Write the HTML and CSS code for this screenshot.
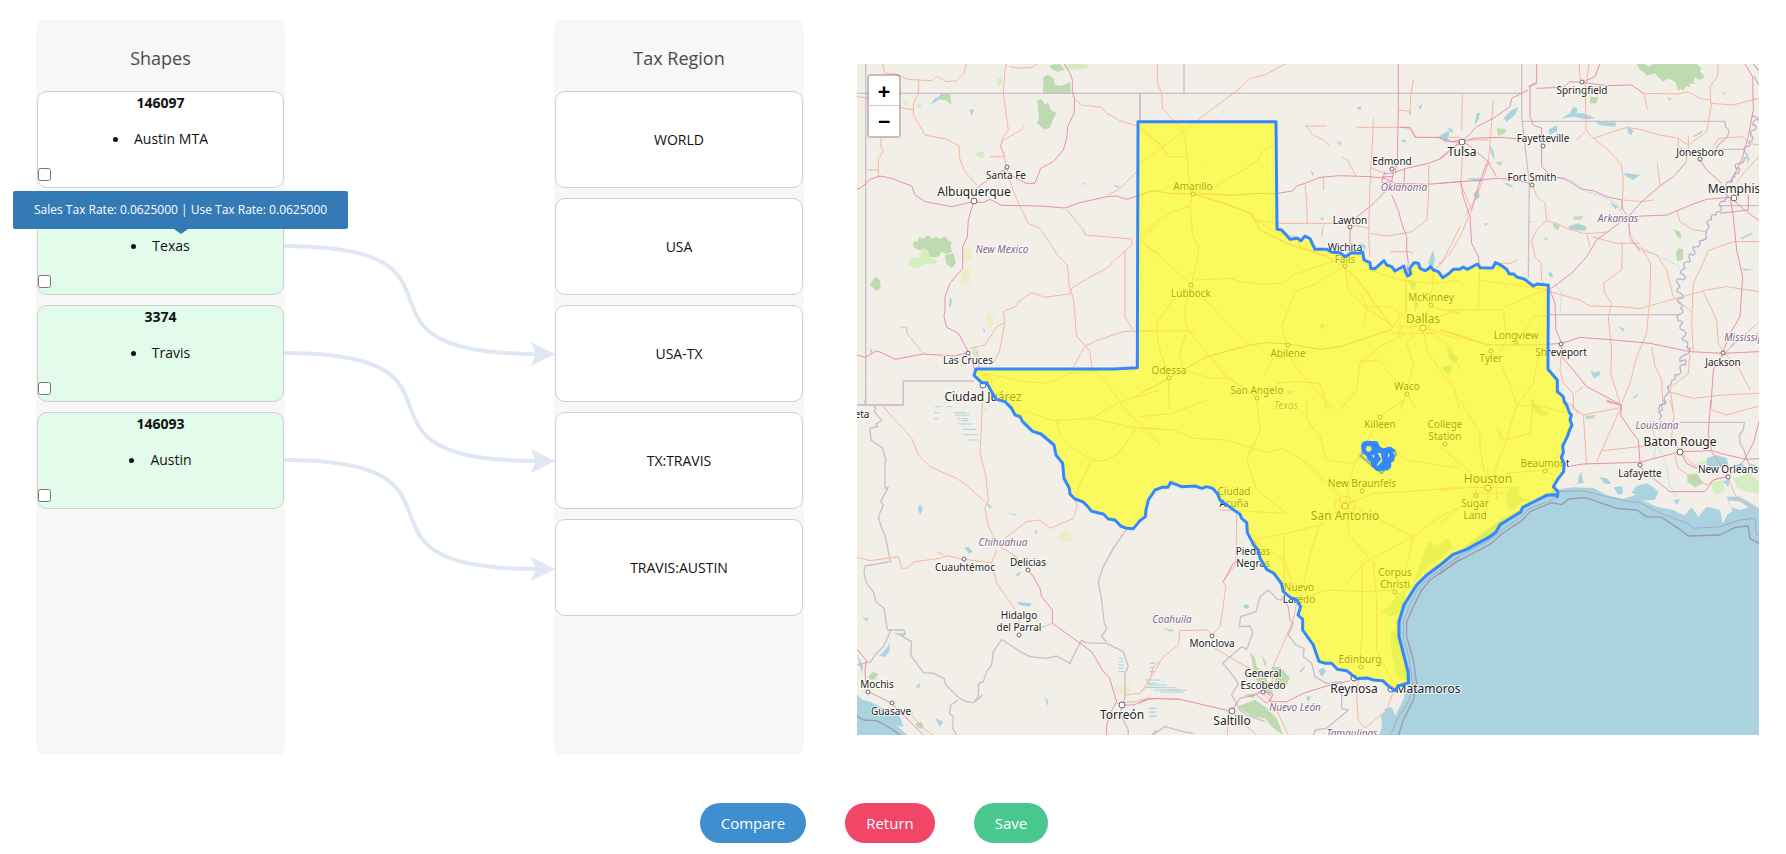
FILE: index.html
```html
<!DOCTYPE html>
<html lang="en">
<head>
<meta charset="utf-8">
<title>Tax region mapping</title>
<link rel="stylesheet" href="styles.css">
</head>
<body>
<main class="layout">
  <section class="column">
    <h2 class="column-title">Shapes</h2>
    <div class="cards">
      <article class="card">
        <label class="card-title" for="s1">146097</label>
        <ul class="names"><li>Austin MTA</li></ul>
        <input class="check" type="checkbox" id="s1">
      </article>
      <article class="card linked">
        <div class="card-title"></div>
        <ul class="names"><li><label for="s2">Texas</label></li></ul>
        <input class="check" type="checkbox" id="s2">
        <div class="tooltip" role="tooltip">Sales Tax Rate: 0.0625000 | Use Tax Rate: 0.0625000</div>
      </article>
      <article class="card linked">
        <label class="card-title" for="s3">3374</label>
        <ul class="names"><li>Travis</li></ul>
        <input class="check" type="checkbox" id="s3">
      </article>
      <article class="card linked">
        <label class="card-title" for="s4">146093</label>
        <ul class="names"><li>Austin</li></ul>
        <input class="check" type="checkbox" id="s4">
      </article>
    </div>
  </section>

  <svg class="links" viewBox="285 20 269 735" aria-hidden="true">
    <defs>
      <path id="head" d="M0 0L-24 -12Q-21 -4 -19 0Q-21 4 -24 12Z"/>
    </defs>
    <path class="link" d="M284 246C497 246 323 354 537 354"/>
    <path class="link" d="M284 353C497 353 323 461 537 461"/>
    <path class="link" d="M284 460C497 460 323 569 537 569"/>
    <use class="head" href="#head" x="555" y="354"/>
    <use class="head" href="#head" x="555" y="461"/>
    <use class="head" href="#head" x="555" y="569"/>
  </svg>

  <section class="column">
    <h2 class="column-title">Tax Region</h2>
    <div class="cards">
      <article class="card region">WORLD</article>
      <article class="card region">USA</article>
      <article class="card region">USA-TX</article>
      <article class="card region">TX:TRAVIS</article>
      <article class="card region">TRAVIS:AUSTIN</article>
    </div>
  </section>

  <section class="map" aria-label="Map">
    <svg class="map-canvas" viewBox="0 0 902 671" role="img" aria-label="Texas and neighbouring states">
      <g transform="scale(0.33333)">
        <!-- sea -->
        <path class="water" d="M2104 1276L2149 1270L2209 1272L2249 1293L2309 1308L2349 1306L2399 1328L2449 1338L2479 1353L2500 1330L2549 1323L2589 1328L2598 1378L2612 1350L2640 1335L2706 1345V2013H1589L1600 1980L1612 1960L1639 1908L1649 1868L1640 1790L1618 1718L1618 1673L1633 1623L1671 1563L1740 1500L1820 1452L1920 1375L1990 1335L2060 1290Z"/>
        <path class="water" d="M0 1893L15 1905L30 1920L60 1935L80 1955L100 1975L125 1990L150 2013H0Z"/>
        <path class="water" d="M1575 1975L1572 1960L1590 1945L1580 1935L1605 1930L1615 1960L1600 2013H1570Z"/>

        <g transform="translate(-51 -42)">
          <path class="forest" d="M610 80L625 75L640 85L645 105L665 108L690 95L692 130H608L610 105ZM630 45L660 42L675 60L650 65L632 55ZM592 150L605 148L615 165L625 158L632 180L650 190L640 205L630 235L612 238L590 218L597 205ZM218 580L225 572L232 576L238 560L248 566L265 556L275 566L290 560L300 568L318 558L325 572L335 575L332 590L336 605L320 612L305 605L298 618L285 622L262 620L250 604L235 600L222 592ZM315 615L340 610L348 640L335 655L318 640ZM90 705L105 680L120 690L122 715L108 722ZM300 128L330 130L335 165L318 150L300 150Z"/>
          <path class="grass" d="M672 42H742V55L700 60L685 58ZM470 82L486 82V106L470 106ZM202 645L215 625L240 620L245 595L265 600L268 622L290 630L285 645L260 640L235 655L215 652ZM405 308L432 305L430 325L412 320ZM190 155L200 160L195 170ZM400 890L420 905L405 925L395 915ZM230 165L245 160L240 178Z"/>
          <path class="sand" d="M370 655H390V700L358 712L362 680ZM440 790L460 795L462 820L452 838L440 815ZM365 595L392 585L395 630L370 640Z"/>
          <path class="water" d="M270 165L285 145L300 138L310 125L306 142L288 155ZM388 180L402 178L395 198ZM327 770L330 742L336 748L332 772ZM815 405L840 408L835 413ZM728 400H740L735 405ZM88 895L98 900L95 912ZM428 835L436 840L433 850Z"/>
          <path class="border" d="M77 42V1063M51 130H901V215M51 1065H190V993H402M901 130H960"/>
          <path class="trunk" d="M128 42L135 70L165 72L205 88L240 90L275 92L290 80L320 95L350 92L372 70L378 42M237 90L235 130L220 160V195L255 255L320 268L357 288L360 330L375 365L410 405M51 140L90 145L110 165L165 170L220 180M500 42L495 60L490 130L498 190L505 240L490 260L482 285L500 350M550 225L545 240L490 270L480 290L497 320M450 320H490M510 50L540 55L575 52L590 42M704 148L725 165L785 172L800 190L840 212L892 228M500 352L515 410L540 470L565 520L600 535L630 580L655 618L682 645L688 710L700 745L710 860L735 885L750 905L755 950M688 735L695 715L735 690L800 655L820 635L875 585V567L735 555L730 538L705 510L680 478M805 435L840 415L890 365M686 732L615 742L575 728L535 755L530 768L495 782L490 790L495 815L485 870L478 905L460 940M495 818L470 830L435 885L390 895M700 952L735 888L770 872L850 845L890 843M855 600V800L880 840M182 832H200V850L252 912M123 262V290L130 305L115 325V378M77 360H115M410 905L418 930L415 955"/>
          <path class="trunk" d="M892 228L925 250L960 285M892 438L925 425L960 420M900 570L960 515M900 570L960 615M890 843H960M418 965L470 978L540 992L610 1000L650 990L690 968L770 965M755 950L800 1000L840 1055L960 1020M425 975H445V1000M430 985H455V1005"/>
          <path class="motorway" d="M51 418L65 412L90 388L120 378L155 385L215 408L225 435L255 455L310 465L335 470L400 455L430 458L450 448L485 466L600 468L675 474L720 458L800 440L830 438L860 448L892 438M672 42L690 70L697 90V125L704 148L702 190L683 230L680 265L670 300L640 335L602 355L585 400L560 400L540 390L490 365M410 415L450 385L500 355M402 455L395 475L385 510L382 560L368 590V655L330 700L315 740V780L312 800L320 832L355 850L385 905M51 915L75 922L110 903L130 910L165 928L250 912L340 918L385 908L405 960"/>
        </g>

        <g transform="translate(849 -42)">
          <path class="water" d="M828 160L838 170L848 155L842 180ZM650 172L665 170L660 182ZM590 272L605 278L602 288ZM780 272L795 268L800 278ZM510 360L522 370L518 378ZM920 230L940 240L935 248ZM895 260L930 240L920 280ZM500 475L510 482ZM540 505L552 502L548 512ZM865 640L878 600L885 625L878 655ZM660 575L680 590L672 600ZM800 690L830 700L820 720ZM820 730L835 760L825 785ZM920 890L935 910L955 920L945 940L928 925ZM905 950L940 945L925 975ZM540 825L555 822L545 840ZM245 855L258 862ZM330 965L342 970ZM440 1022L460 1025L450 1035ZM570 675L580 690ZM500 785L510 790Z"/>
          <path class="grass" d="M242 182L256 182L250 192ZM185 350L200 345L190 358Z"/>
          <path class="border" d="M0 215V130H960M132 42V130"/>
          <path class="trunk" d="M52 42V100L65 130L68 175L100 212L130 240L143 320L143 375L157 430L150 470L155 520L158 560L177 590L172 630L155 700M435 42L375 75L330 85L300 115L180 205L130 245L70 290L0 340M0 238L65 285L85 320H143M215 415L275 380L310 360L355 330L360 310L400 285M150 468L90 490L40 520L0 560M0 570L100 655L155 705L245 800L330 885M155 705L95 755L52 815L50 850L60 900L85 980L88 1080M165 690L270 685L300 695L360 702L430 700L460 675L560 640L610 625M158 710L135 770L137 820L150 850L210 920L260 980L350 1040M0 842H138L165 850M138 850L118 910L130 960L210 985L270 985L345 1040M610 650L520 705L465 725L425 830L440 880L450 920L480 970L520 1010L580 1080M615 655L625 720L680 775L760 830M700 205L698 270L692 350V400M690 400L688 470L686 560L690 620M690 352L735 372M650 232H780L810 235L825 262H960M495 228L560 228M500 230L520 255L550 270L572 290M605 322L622 330L648 378M495 405L500 450L502 525M550 380V420M550 525L545 560M415 520H600L690 535M690 550L740 558L780 552L815 545L860 510L866 430V345M820 90L812 140L810 195M775 180L808 184L810 195M960 530L930 590L905 640L880 660L880 690L870 760M350 510L410 550L470 560L480 590L560 620M230 450L330 490L345 510L415 520M750 605H810L820 612M670 770H760M670 830L680 770L660 730M960 690L880 700L780 690L690 660M660 935L720 930L740 960L800 1030M600 1080L650 1020L660 940L720 890L800 850M370 980L400 925L445 920M410 1000L460 995L540 1000L550 1030L560 1080"/>
          <path class="trunk" d="M755 835L780 800L765 780L848 830M848 830L960 870M848 830L930 890L960 960M848 830L800 880L820 940L800 1030M755 830H870M755 850H880M780 815V855M815 820V860M848 830L870 770L960 790M848 830L900 800L960 775M848 830L860 900L900 960M800 1030L780 1080M800 1030L830 1080"/>
          <path class="motorway" d="M775 42V180L772 330L765 370M415 430L460 422L470 408L495 400L540 382L600 377L690 380L735 385L765 400L860 403L900 400L960 395M755 370L800 355L865 340L905 325L960 275M780 232H810L828 262L910 263L935 275L960 270M645 505L690 470L735 425M630 530V610M755 435L775 480L785 520L800 560V600L805 640L798 680V790M735 372L760 368L755 395L725 398L735 365M725 380H760M793 355V400L755 410M898 640L905 635M0 435L40 422L90 430L160 432L215 432L275 436L360 430L408 432M160 432L250 460L335 490L360 540L440 580L560 620L610 650L650 685L755 830M0 1030L60 1000L200 920L330 885L380 878L445 882L540 898L600 890L660 870L755 838"/>
        </g>

        <g transform="translate(1749 -42)">
          <path class="forest" d="M590 42H615L625 50L640 42H770L785 55L780 65L795 80L780 90L765 82L760 95L768 102L750 100L748 112L738 108L732 122L722 116L715 122L705 95L685 85L670 95L655 82L645 70L620 78L610 65L600 60ZM450 140L475 142L470 160L450 160ZM170 235L200 238L195 250L175 258ZM165 335L190 335L180 348ZM758 258L790 240L785 250L762 262ZM400 500L430 498L425 508L402 510ZM338 520L360 525L355 540L342 535ZM385 528L415 520L440 530L438 542L390 540ZM708 610L715 595L730 598L728 630L712 634ZM700 538L720 545L725 568L712 560ZM308 562L325 565L318 572ZM850 128L860 125L850 138ZM680 142L695 145L690 152ZM920 320L930 325L922 340ZM738 895L755 892L752 905ZM255 512L285 514L270 516ZM290 465L305 468Z"/>
          <path class="water" d="M105 215L110 190L120 188L115 210L105 225ZM190 205L215 180L235 172L225 195L200 215ZM325 240L350 225L352 242L330 255ZM390 190L400 170L412 175L410 190L430 190L465 205L440 208L400 200L365 205ZM460 210L490 215L530 218L525 230L480 226ZM560 230L580 240L575 255L565 250ZM548 370L580 372L600 375L580 390L560 380ZM148 285L160 300L165 330L155 315ZM80 385H125L118 395L95 392ZM190 400L205 400L220 408L215 412ZM100 430L115 420L120 440L108 450ZM385 535L410 522L440 535L420 540ZM130 520H145L138 528ZM900 565L940 545L935 553L905 568ZM905 655L942 658L915 662ZM325 665L335 668L340 680L330 682ZM535 828L555 838L548 845ZM450 962L465 968L478 962L480 975L462 985ZM575 1045L595 1030L590 1042ZM120 600L135 605ZM230 585L240 600ZM888 605L910 605ZM0 265L20 255L25 270ZM510 455L535 470L525 478ZM870 890L885 870L880 888Z"/>
          <path class="border" d="M0 130H245M245 42V200L268 400L265 685M247 214H855M855 214L857 232L868 240L862 262L845 275L832 290L828 298H915M325 794H715M835 467H957"/>
          <path class="river" d="M940 42L957 62M942 80L957 105M935 200Q950 195 955 210Q940 205 938 225Q955 225 945 240Q925 240 935 258Q945 270 928 275Q935 290 920 290Q905 295 918 310Q930 320 912 325Q915 338 900 340Q880 340 888 355Q905 350 895 370Q880 365 885 380Q870 380 878 395Q860 390 858 405Q850 430 865 440Q850 450 855 455Q840 450 838 465Q850 475 840 485Q825 485 828 495Q810 490 815 510Q805 505 800 520Q815 530 800 540Q795 560 800 565Q785 575 778 572Q785 590 770 590Q752 590 762 600Q770 615 755 615Q745 605 748 625Q755 640 740 635Q725 640 735 655Q720 660 722 670Q745 680 730 690Q705 680 712 700Q725 710 715 715Q702 725 720 728Q740 745 720 745Q705 745 718 760Q735 765 722 775Q735 785 725 790Q705 795 715 812Q735 815 722 825Q715 840 730 840Q745 850 732 860Q720 870 735 872Q750 880 740 890Q755 900 745 910Q715 920 720 935Q745 920 735 945Q715 940 722 962Q725 975 705 975Q710 990 695 992Q695 1008 682 1010Q690 1025 680 1035Q665 1045 678 1055Q672 1065 660 1065L655 1080"/>
          <path class="stream" d="M350 385L400 395L440 425L490 440L530 460L550 500M570 545L600 590L650 615L720 650M345 700L365 730L360 790"/>
          <path class="trunk" d="M67 130L65 240M66 276V350L62 400L95 480L60 560L30 610L0 640M80 270H145M160 150L155 215L145 340L110 440L75 500M140 340H155M418 42L420 90M447 42L440 100M436 100L438 240L460 265L505 300L545 345L550 400L545 480M410 270L435 245M460 265L520 245L560 232L600 238L660 255L715 265L745 285L800 245L808 200L815 160L808 150L780 145L745 125L715 132L612 130M612 130L622 178M835 42L832 80L810 110L812 160L880 165L957 145M745 258L745 305L738 335M715 265V290L740 305M820 290L835 265L910 260L925 280L957 285M652 340L660 405M957 320L910 370L890 400M550 450L605 455L640 450M280 410L290 440L315 460L320 510L290 540L275 570L285 620L303 640L305 690L325 715M320 512L350 520L380 535L430 550L460 550L510 545M440 550L450 590M455 560L530 580L600 580M547 580L545 660L490 700L495 730L515 760L505 800L515 900L512 970L540 1060M568 570L605 600L650 615L680 660L700 740L760 790M605 595L632 640L630 740L620 850L590 920L570 1000L545 1060M330 725L420 750L450 768L540 770L600 776L690 750L800 720L860 710L957 725M710 480L720 515L760 540L800 545M957 575L880 575L805 602L780 660L760 700L755 820L760 905M790 725L830 810L835 880L850 905L900 960L930 1020M957 815L870 895L852 910M635 890L645 950L665 990L668 1060M685 1025L760 1045L850 1035L957 1030M750 910L745 970L690 1015L700 1080M365 895L360 960L370 1000L400 1030L400 1080M430 1010L405 1030M170 640H210L235 628M120 640L118 690L115 780M118 690L325 720M195 770L290 730L325 720M240 870L280 800L325 795M0 840L60 855L115 875M25 780H190L200 870L170 920L210 1000L230 1070M60 1080L40 1010L0 960M230 1065L280 1000L300 900"/>
          <path class="motorway" d="M290 42V100L270 110V200L280 225L305 235V350L330 375M290 115L370 112L390 95L426 97L500 107L575 105L610 130M480 42L465 80L426 97M0 265L30 275L66 276L100 265L175 262L240 267M66 276L110 230L160 205L210 170L215 145L265 120M290 97L265 110M66 270L90 290L140 330L170 380M0 400L60 395L110 392L165 385L215 388L270 400M66 276L30 300L0 325M140 340L115 410L95 480M62 395L70 440L90 500L95 580L115 620L118 640M350 382L375 385L425 418L460 422L500 440L545 450L548 478L565 500M565 500L605 455L660 408L700 380L740 335M565 500L680 495L760 462L800 448L870 442M565 500L510 540L470 570L440 620L400 665L355 700L328 718M565 500L570 560L600 605M780 330L800 360L845 400M915 42L938 80L940 180L925 260L905 330L870 400M870 442L880 500L890 600L908 680L900 800L870 850L850 905M870 442L920 485L957 512M925 435V480L840 490M330 720L345 760L348 840L365 880M295 885L365 880L420 862L500 868L630 880L750 905L850 910L957 905M365 880V920L400 960L440 1010L545 1065M850 910L820 960L812 1080M0 838L90 870L150 885L225 885L295 885M545 1065L540 1080M545 1065L500 1055"/>
        </g>

        <g transform="translate(-51 1008)">
          <path class="forest" d="M85 830L98 815L115 822L105 838L90 840ZM205 930L220 935L215 945ZM225 970L245 965L252 985L235 985Z"/>
          <path class="sand" d="M652 410L680 385L705 430L690 425L660 425ZM820 860L875 845L870 880L840 885ZM580 820L600 830L595 845ZM430 10L445 30L430 38Z"/>
          <path class="water" d="M233 325L240 312L248 328L240 345ZM373 442L385 440L398 455L388 463ZM437 303L455 320L450 328ZM495 340L530 342L525 346ZM525 525L545 512L535 528ZM582 395L592 388L588 405ZM530 606L575 610L570 620L540 615ZM612 885L625 905L622 918ZM60 640L75 655L85 652L80 665ZM118 768L135 750L150 730L148 755L135 770ZM160 700L195 700L190 712ZM228 860L240 848L238 865ZM285 955L310 965L300 980ZM50 760L70 800L65 820ZM51 895L90 905L110 915L140 930L180 950L190 980L160 975L120 960L60 930Z"/>
          <path class="hatch" d="M285 20H300M282 38H298M282 56H296M320 20H335M340 38H380M350 56H385M355 72H400M368 88H410M370 104H412M385 120H415M345 45H388M365 62H385M838 775H850M835 785H850M835 795H852M835 805H850M834 815H852M930 790H945M930 803H942M915 840H960M920 850H950M915 862H960M928 925H950M926 936H948M928 948H950"/>
          <path class="maritime" d="M51 948L70 960L110 962L135 975L160 990L180 1005"/>
          <path class="border" d="M75 0V14M51 14H190V0M98 14L108 25L103 35L125 62L108 72L112 80L90 85L93 120L128 145L138 182L135 190V265L145 262L122 305L130 315L115 350L125 385L135 405L148 470L152 485L75 498L72 520L80 550L100 575L108 605L132 625L142 690L160 690H192L195 702L188 710L215 725L212 765L250 818L280 820L312 835L318 855L355 892L378 905L400 908L415 890L416 850L430 845L440 815L455 795L460 755L485 718L510 735L550 760L570 770L620 775L650 768L690 790L705 758L725 720L735 728L800 730L850 755L865 800L855 820V890L840 940L865 990V1005M428 885L405 905M355 900L332 915L328 940L340 950L338 985L350 1005M152 692L130 740L105 765L92 785L51 795M858 390L820 445L790 500L775 545L785 600L792 665L800 685L785 710L800 725M935 1005L950 990"/>
          <path class="trunk" d="M125 14L160 55L190 85L215 115L235 165L270 200L350 235L385 260L435 305M427 0L425 60L420 160L438 230L445 300L435 325L445 380L480 440M495 415L560 365L600 360L630 385L700 355L712 320L705 300M51 472L90 482L175 470L185 505H200L225 485L300 475L320 467L370 478L455 488L470 450M290 455L310 465M480 440L530 470L540 500M455 490L470 550L520 620L540 670M600 685L637 670M215 945L250 985L280 1005M855 885L900 880L925 855L940 800L960 785M830 910L880 905L960 895"/>
          <path class="trunk" d="M530 45L560 35L640 62L755 55L840 5M755 55L890 85L960 85M650 65L660 105L700 145L755 180L790 183L830 165L865 120L890 85M755 180L715 260L712 300M835 0L870 45L915 85L960 135"/>
          <path class="motorway" d="M565 512L580 530L600 565L605 590L637 630V670L700 715L755 755L790 815L808 832L830 905M830 905L818 925L800 975V1005M845 915L880 915L920 900M51 748L80 782L75 810L78 860M85 875L155 910L250 1005"/>
        </g>

        <g transform="translate(849 1008)">
          <path class="forest" d="M330 755L345 775L350 800L370 815L385 850L400 880L380 880L350 840L340 800ZM365 765L380 790L375 800ZM395 800L420 800L450 835L435 860L410 865ZM290 920L345 900L375 920L410 955L430 1005L400 985L375 955L340 950ZM310 885L350 880L340 895ZM65 680L85 688L105 690L90 695Z"/>
          <path class="water" d="M308 618L320 612L330 620L318 628ZM535 812L550 802L558 815L545 830ZM498 890L512 888L505 905ZM720 945L755 925L765 950L740 990L750 1005H715L735 975Z"/>
          <path class="hatch" d="M30 790H45M28 802H45M30 815H45M25 855H80M25 863H110M40 870H118M60 876H130M80 870H140M28 925H48M26 937H46M30 949H50"/>
          <path class="border" d="M428 600L412 598L385 570L360 590L348 635L302 650L298 680L330 678L338 700L320 748L305 740L248 790L270 815L295 850L275 885L300 930L320 945L375 965M425 590L445 620L450 660L460 670L445 705L468 735L492 745L490 770L515 790L525 830L560 850L605 845M605 850V925L625 930L560 985L525 990L522 1005M38 1005L75 980L130 995L160 1000M495 800L480 815"/>
          <path class="trunk" d="M290 345L288 490L250 545L258 560L240 680L216 705M216 710L205 690L120 692L115 735L70 770L40 820L0 880M225 745L300 790L360 820L370 870M470 610L460 660L430 730L400 800L395 860M265 935L262 1005M275 935L300 960L350 1005M370 880L400 910L445 1005M655 840L650 900L655 960L675 985M760 875L740 930L675 985M0 900L50 895L120 898"/>
          <path class="motorway" d="M0 910L20 895L120 898L265 932M275 932L300 895L345 885L370 870L395 890L390 905L440 905L490 880L560 858L630 842M300 480L280 490L248 548M365 870L400 885L380 910L350 885Z"/>
          <path class="trunk" d="M0 85L100 90L160 115L260 120L380 158L430 145L500 190L600 290M615 315L540 375L520 430L500 510L480 600M625 318V400L700 490L760 570M615 315L700 280L800 275L960 262M615 315L640 200L720 50L790 0M720 120L800 180L960 205M666 490V690L662 790M480 600L560 570L670 575L760 570M700 490L710 600V750L760 850M340 420L440 400L540 375M0 50L100 40L200 0M820 410L900 350L960 320M820 410L740 370L640 320M820 410L800 500L760 570M440 340L240 330M440 340L350 270L320 180L360 90L350 0M432 400L432 560M610 560L670 490L820 410M480 600L430 480L340 420M500 0V60L540 110L560 180L640 190"/>
          <path class="trunk" d="M585 315A30 25 0 1 0 645 315A30 25 0 1 0 585 315M600 290V340M630 290V340M585 305H650"/>
          <path class="maritime" d="M960 478L910 512L870 540L845 570L820 620L800 665V710L820 780L830 850L820 900L790 960L776 1005"/>
          <path class="maritime thin" d="M960 470L905 505L865 535L835 565L808 618L790 665V710L808 780L818 850H832M818 850L808 900L770 960L752 1005"/>
        </g>

        <g transform="translate(1749 1008)">
          <path class="grass" d="M600 290L625 285L635 300L615 308L600 300ZM770 185L800 182L795 200L775 195ZM810 250L850 240L855 270L825 285ZM880 235L930 220L957 245V280L920 275L890 260Z"/>
          <path class="forest" d="M742 225L770 220L790 250L765 262L742 245ZM435 48L468 45L460 55L440 58Z"/>
          <path class="water" d="M418 225L424 215L428 240L432 248L412 252ZM478 232L500 235L515 252L495 252ZM520 262L545 258L550 278L535 285ZM590 258L620 250L640 262L655 275L645 300L610 300L590 285L575 278ZM800 175L830 165L860 175L865 195L835 205L800 195ZM885 195L905 190L920 205L895 212ZM700 300L720 298L710 315ZM860 290L900 290L957 325V360L880 340ZM540 300L600 280L620 320ZM850 245L870 235L865 262ZM930 190L957 200V215L935 205Z"/>
          <path class="land" d="M715 312L745 310L790 290L830 295L855 305L852 318L842 325L860 345L848 368L840 330L800 320L775 350L755 322L735 345L715 340ZM868 300L900 305L925 322L900 330L870 320Z"/>
          <path class="river" d="M670 0L678 10L662 15L668 28L655 35L665 48L658 60"/>
          <path class="stream" d="M640 100L655 140L680 200L690 260L710 290M630 60L650 130L640 180"/>
          <path class="border" d="M720 67H913L910 90L898 105L900 130L912 150L922 180L930 200"/>
          <path class="trunk" d="M545 22L430 45L370 0M430 45L440 195M540 28L470 185M485 152L600 140L660 140M690 0L702 45L695 110L720 155M815 30L860 45L957 18M720 155L705 170L715 205L770 240L800 255M720 155L750 185L775 205M865 235L885 285L930 320L957 332M800 255L830 235L862 230M395 10L415 42"/>
          <path class="motorway" d="M500 0L545 18L542 45L575 95L595 120L600 185M392 198L430 192L600 187L720 155L815 152L860 165L920 178L957 176M720 155L740 190L770 205M600 200L640 235L690 275L795 275L820 240L862 230M812 0L805 100L815 155L860 225M957 65L940 130L910 185L870 225"/>
          <path class="trunk" d="M90 245H200M90 262H215M95 280H195M110 225V290M143 205V330M170 240V300M0 270L90 262L143 262M143 262L200 220L310 210L370 195M143 262L120 150V100L60 0M143 262L0 140M143 262L60 320L0 370M143 262L200 120L230 15M230 15L310 20L380 40M200 120L270 100L280 0M310 210L340 225M315 215L360 160"/>
          <path class="maritime" d="M0 522L45 488L155 430L185 402L245 362L270 335L335 308L365 314L385 297L437 293L530 325L590 330L620 350L665 352L715 385L745 408L840 405L885 382L925 378L930 415L957 430"/>
          <path class="maritime thin" d="M0 512L40 478L150 420L180 395L240 352L265 328L335 300L360 275L430 272L500 290L570 305L600 308L640 330L700 355L740 368L760 385L840 380L900 360L945 355L950 405L957 406"/>
        </g>

        <!-- bays and wetlands along the Texas coast -->
        <path class="bay" d="M1949 1290L1960 1270L1985 1268L1990 1300L2015 1305L1985 1320L1965 1340L1950 1325ZM1700 1470L1715 1430L1740 1445L1770 1425L1790 1450L1740 1490L1700 1520L1670 1560L1690 1500ZM1620 1590L1650 1580L1640 1620L1620 1650L1600 1660L1570 1640L1600 1625ZM1600 1700L1625 1700L1640 1780L1652 1850L1620 1840L1605 1780ZM2015 1000L2060 1040L2075 1050L2060 1058L2030 1040ZM1920 1090L1935 1110L1940 1130L1925 1120Z"/>
      </g>

      <g class="dots">
        <circle cx="150" cy="103" r="2"/><circle cx="117" cy="137" r="3"/><circle cx="111" cy="289" r="2"/><circle cx="126" cy="321" r="3"/>
        <circle cx="336" cy="130" r="2"/><circle cx="334" cy="221" r="2"/><circle cx="431" cy="281" r="2"/><circle cx="312" cy="314" r="2"/><circle cx="400" cy="334" r="2"/><circle cx="550" cy="330" r="2"/><circle cx="488" cy="202" r="2"/><circle cx="493" cy="163" r="2"/><circle cx="535" cy="105" r="2"/><circle cx="574" cy="241" r="2"/><circle cx="566" cy="264" r="3"/>
        <circle cx="605" cy="78" r="3"/><circle cx="725" cy="18" r="2"/><circle cx="686" cy="82" r="2"/><circle cx="675" cy="121" r="2"/><circle cx="843" cy="95" r="2"/><circle cx="877" cy="134" r="3"/><circle cx="659" cy="278" r="2"/><circle cx="634" cy="287" r="2"/><circle cx="704" cy="280" r="2"/><circle cx="866" cy="289" r="2"/>
        <circle cx="107" cy="495" r="2"/><circle cx="171" cy="506" r="2"/><circle cx="162" cy="571" r="2"/><circle cx="11" cy="628" r="2"/><circle cx="35" cy="639" r="2"/><circle cx="265" cy="641" r="3"/>
        <circle cx="523" cy="353" r="2"/><circle cx="588" cy="380" r="2"/><circle cx="505" cy="427" r="2"/><circle cx="488" cy="442" r="3"/><circle cx="538" cy="528" r="2"/><circle cx="355" cy="572" r="2"/><circle cx="406" cy="628" r="2"/><circle cx="504" cy="603" r="2"/><circle cx="497" cy="614" r="3"/><circle cx="534" cy="625" r="3"/><circle cx="375" cy="647" r="3"/><circle cx="397" cy="480" r="2"/>
        <circle cx="823" cy="388" r="3"/><circle cx="783" cy="401" r="2"/><circle cx="871" cy="413" r="2"/><circle cx="688" cy="407" r="2"/><circle cx="631" cy="424" r="3"/><circle cx="619" cy="432" r="2"/>
      </g>

      <g class="town">
        <text x="149" y="115">Santa Fe</text><text x="111" y="300">Las Cruces</text>
        <text x="336" y="126">Amarillo</text><text x="334" y="233">Lubbock</text><text x="431" y="293">Abilene</text><text x="312" y="310">Odessa</text><text x="400" y="330">San Angelo</text><text x="550" y="326">Waco</text>
        <text x="488" y="187">Wichita</text><text x="488" y="199">Falls</text><text x="493" y="160">Lawton</text><text x="535" y="101">Edmond</text><text x="574" y="237">McKinney</text>
        <text x="725" y="30">Springfield</text><text x="686" y="78">Fayetteville</text><text x="675" y="117">Fort Smith</text><text x="843" y="92">Jonesboro</text><text x="659" y="275">Longview</text><text x="634" y="298">Tyler</text><text x="704" y="292">Shreveport</text><text x="866" y="302">Jackson</text>
        <text x="5" y="354">eta</text><text x="108" y="507">Cuauhtémoc</text><text x="171" y="502">Delicias</text><text x="162" y="555">Hidalgo</text><text x="162" y="567">del Parral</text><text x="20" y="624">Mochis</text><text x="34" y="651">Guasave</text>
        <text x="523" y="364">Killeen</text><text x="588" y="364">College</text><text x="588" y="376">Station</text><text x="505" y="423">New Braunfels</text><text x="377" y="431">Ciudad</text><text x="377" y="443">Acuña</text><text x="396" y="491">Piedras</text><text x="396" y="503">Negras</text><text x="442" y="527">Nuevo</text><text x="442" y="539">Laredo</text><text x="538" y="512">Corpus</text><text x="538" y="524">Christi</text><text x="355" y="583">Monclova</text><text x="406" y="613">General</text><text x="406" y="625">Escobedo</text><text x="503" y="599">Edinburg</text>
        <text x="783" y="413">Lafayette</text><text x="871" y="409">New Orleans</text><text x="688" y="403">Beaumont</text><text x="618" y="443">Sugar</text><text x="618" y="455">Land</text>
      </g>
      <g class="city">
        <text x="117" y="132">Albuquerque</text><text x="126" y="337">Ciudad Juárez</text><text x="566" y="259">Dallas</text><text x="605" y="92">Tulsa</text><text x="877" y="129">Memphis</text><text x="265" y="655">Torreón</text><text x="488" y="456">San Antonio</text><text x="497" y="629">Reynosa</text><text x="571" y="629">Matamoros</text><text x="375" y="661">Saltillo</text><text x="823" y="382">Baton Rouge</text><text x="631" y="419">Houston</text>
      </g>
      <g class="state">
        <text x="145" y="189">New Mexico</text><text x="547" y="127">Oklahoma</text><text x="429" y="345">Texas</text><text x="761" y="158">Arkansas</text><text x="891" y="277">Mississippi</text><text x="146" y="482">Chihuahua</text><text x="315" y="559">Coahuila</text><text x="438" y="647">Nuevo León</text><text x="495" y="673">Tamaulipas</text><text x="800" y="365">Louisiana</text>
      </g>

      <g transform="scale(0.33333)">
        <path class="shape" d="M843 173H1257L1260 496L1274 498L1299 526L1322 523L1332 530L1344 516L1359 524L1374 556L1409 556L1424 565L1449 566L1464 578L1484 566L1508 568L1517 564L1521 588L1539 596L1541 613L1554 614L1581 590L1589 603L1604 608L1614 621L1630 612L1641 606L1645 622L1652 636L1661 630L1658 614L1671 596L1684 598L1689 613L1704 620L1712 616L1721 608L1729 618L1744 623L1757 641L1774 630L1789 616L1809 616L1819 609L1831 616L1862 600L1869 611L1907 612L1915 596L1929 602L1949 616L1957 630L1970 630L1981 640L2000 644L2011 652L2029 666L2040 660L2060 662L2074 663L2073 916L2101 948V983L2119 998L2122 1014L2129 1023L2137 1045L2143 1053L2139 1068L2145 1083L2137 1100L2131 1118L2117 1146L2119 1166L2113 1180L2121 1198L2120 1223L2104 1243L2089 1268L2103 1283L2101 1298L2094 1292L2069 1294L1997 1330L1991 1344L1929 1382L1917 1404L1899 1418L1829 1456L1787 1472L1749 1504L1709 1533L1679 1563L1641 1623L1626 1673V1718L1644 1788L1653 1823L1655 1856L1624 1866L1614 1880L1599 1870L1577 1850L1550 1848L1530 1842L1499 1844L1469 1820L1441 1816L1424 1798L1405 1798L1386 1792L1380 1775L1369 1743L1337 1698V1666L1323 1653L1331 1628L1319 1608L1300 1600L1279 1583L1274 1560L1251 1528L1229 1516L1209 1483L1204 1458L1191 1444L1171 1406L1169 1376L1154 1363L1149 1351L1119 1330L1089 1308L1082 1290L1067 1273L1049 1268L1034 1273L1014 1266L974 1268L941 1255L933 1270L915 1270L894 1278L874 1308L867 1338L865 1358L849 1370L829 1394L809 1393L791 1386L774 1368L754 1365L739 1350L704 1342L690 1325L677 1313L654 1305L639 1290L637 1273L621 1243L617 1198L597 1173L591 1143L570 1125L552 1110L527 1102L497 1073L489 1058L474 1053L464 1033L444 1013L417 1006L401 978L389 956L374 956L351 934L357 915L769 915L841 911Z"/>
        <path class="county" d="M1526 1155L1511 1176L1574 1227L1617 1172L1612 1158L1590 1152"/>
        <path class="metro" fill-rule="evenodd" d="M1514 1145L1518 1136L1530 1132L1560 1134L1568 1150L1580 1155L1600 1150L1612 1160L1604 1166L1610 1172V1190L1600 1194L1601 1208L1592 1217L1560 1219L1545 1206L1543 1192L1534 1186L1530 1175L1516 1163ZM1524 1154L1530 1143L1544 1146L1546 1158L1536 1166L1526 1162ZM1558 1164L1573 1166L1578 1192L1562 1208L1556 1204L1570 1186ZM1544 1172L1553 1170L1554 1182L1547 1184ZM1592 1168L1600 1166L1598 1180L1590 1182Z"/>
      </g>
    </svg>
    <div class="zoom">
      <button class="zoom-button" type="button" aria-label="Zoom in">+</button>
      <button class="zoom-button" type="button" aria-label="Zoom out">−</button>
    </div>
  </section>
</main>

<footer class="actions">
  <button class="button compare" type="button">Compare</button>
  <button class="button return" type="button">Return</button>
  <button class="button save" type="button">Save</button>
</footer>
</body>
</html>
```

FILE: styles.css
```css
* { box-sizing: border-box; }

body {
  margin: 0;
  background: #fff;
  color: #111;
  font: 14px/22px "Open Sans", "Noto Sans", sans-serif;
}

.layout {
  display: grid;
  grid-template-columns: 249fr 269fr 250fr 53fr 902fr;
  align-items: start;
  padding: 20px 27px 0 36px;
}

.column {
  min-height: 735px;
  padding: 0 1px 20px;
  border-radius: 2%;
  background: #f7f7f7;
}

.column-title {
  margin: 0;
  padding: 26px 0 21px;
  color: #4a4a4a;
  font-size: 18px;
  font-weight: 400;
  line-height: 24px;
  text-align: center;
}

.cards { display: grid; gap: 10px; }

.card {
  position: relative;
  display: flex;
  flex-direction: column;
  min-height: 97px;
  border: 1px solid #d3cfcf;
  border-radius: 10px;
  background: #fff;
}

.linked { background: #e2fbea; }

.region {
  align-items: center;
  justify-content: center;
}

.card-title {
  min-height: 22px;
  font-weight: 700;
  text-align: center;
}

.names {
  margin: 14px 0 18px;
  padding: 0;
  list-style: none;
}

.names li {
  display: flex;
  align-items: center;
  justify-content: center;
  gap: 16px;
}

.names li::before {
  width: 5px;
  height: 5px;
  border-radius: 50%;
  background: #111;
  content: "";
}

.check {
  width: 13px;
  height: 13px;
  margin: 0;
}

.tooltip {
  position: absolute;
  top: -8px;
  left: -25px;
  z-index: 2;
  padding: 8px 21px;
  border-radius: 2px;
  background: #337ab7;
  color: #fff;
  font-size: 12px;
  white-space: nowrap;
}

.tooltip::after {
  position: absolute;
  top: 100%;
  left: 50%;
  margin-left: -7px;
  border: 7px solid transparent;
  border-top: 5px solid #337ab7;
  border-bottom: 0;
  content: "";
}

.links {
  z-index: 1;
  width: 100%;
  overflow: visible;
}

.link {
  fill: none;
  stroke: #dfe8f2;
  stroke-width: 4;
}

.head { fill: #dfe8f2; }

.map {
  position: relative;
  grid-column: 5;
  margin-top: 44px;
  overflow: hidden;
  background: #f2efe9;
}

.map-canvas {
  display: block;
  width: 100%;
}

.water { fill: #aad3df; }
.forest { fill: #bddab1; }
.grass { fill: #d6edc0; }
.sand { fill: #eceecb; }
.land { fill: #f2efe9; }
.bay { fill: #aad3b8; opacity: 0.6; }

.border,
.river,
.stream,
.trunk,
.motorway,
.maritime,
.hatch {
  fill: none;
  stroke-linejoin: round;
}

.border { stroke: #cdbccd; stroke-width: 4; }
.river { stroke: #b9b4cb; stroke-width: 4; }
.stream { stroke: #c9e0e6; stroke-width: 3; }
.trunk { stroke: #f8b5a0; stroke-width: 3; }
.motorway { stroke: #e990a9; stroke-width: 3; }
.maritime { stroke: #9f96b4; stroke-width: 4; }
.thin { stroke-width: 2; }
.hatch { stroke: #aad3df; stroke-width: 3; }

.dots circle {
  fill: #fff;
  stroke: #666;
  stroke-width: 1;
}

.town,
.city,
.state {
  font-family: "Noto Sans", sans-serif;
  text-anchor: middle;
  paint-order: stroke;
  stroke: #fffc;
  stroke-width: 2;
  stroke-linejoin: round;
}

.town { fill: #222; font-size: 10px; }
.city { fill: #222; font-size: 12px; }
.state { fill: #856389; font-size: 10px; font-style: italic; }

.shape {
  fill: #ff0;
  fill-opacity: 0.6;
  stroke: #38f;
  stroke-width: 9;
  stroke-linejoin: round;
}

.county {
  fill: none;
  stroke: #a3c274;
  stroke-width: 8;
  stroke-linejoin: round;
}

.metro {
  fill: #38f;
  stroke: #38f;
  stroke-width: 4;
  stroke-linejoin: round;
}

.zoom {
  position: absolute;
  top: 10px;
  left: 10px;
  display: grid;
  border: 2px solid #0003;
  border-radius: 4px;
  background-clip: padding-box;
}

.zoom-button {
  width: 30px;
  height: 30px;
  padding: 0;
  border: 0;
  background: #fff;
  color: #000;
  font: 700 20px/28px "DejaVu Sans Mono", monospace;
}

.zoom-button:first-child {
  border-bottom: 1px solid #ccc;
  border-radius: 2px 2px 0 0;
}

.zoom-button:last-child { border-radius: 0 0 2px 2px; }

.actions {
  display: flex;
  justify-content: center;
  gap: 39px;
  padding: 48px 38px 11px 0;
}

.button {
  height: 40px;
  padding: 0 21px;
  border: 0;
  border-radius: 20px;
  color: #fff;
  font: 15px/24px "Open Sans", "Noto Sans", sans-serif;
}

.compare { background: #3e8ed0; }
.return { background: #f14668; }
.save { background: #48c78e; }
```
